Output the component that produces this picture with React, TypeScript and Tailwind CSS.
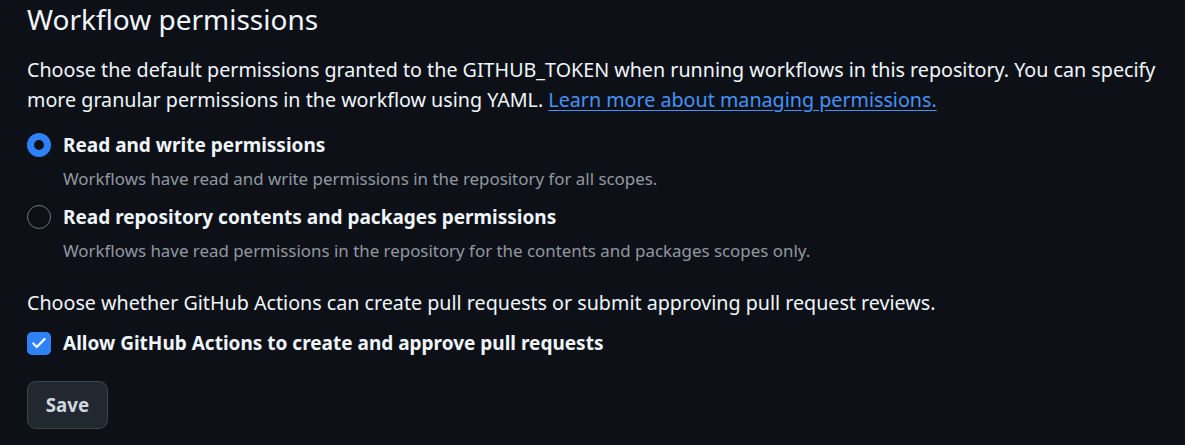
import { useState } from "react";

const font = { fontFamily: '"Noto Sans", "Open Sans", sans-serif' };

function Radio({ checked, onClick }: { checked: boolean; onClick: () => void }) {
  return (
    <button
      type="button"
      onClick={onClick}
      className={`mt-[1px] h-6 w-6 shrink-0 rounded-full ${
        checked ? "border-[7px] border-[#2f81f7] bg-[#0d1117]" : "border-[1.5px] border-[#6e7681] bg-transparent"
      }`}
    />
  );
}

export default function App() {
  const [mode, setMode] = useState<"write" | "read">("write");
  const [allowPr, setAllowPr] = useState(true);

  return (
    <div className="min-h-screen w-full bg-[#0d1117] text-[#f0f6fc]" style={font}>
      <div className="px-[27px]">
        {/* Heading */}
        <h2 className="pt-[1px] text-[28px] leading-[36px] font-normal">Workflow permissions</h2>

        <p className="mt-[18px] text-[19.7px] leading-[30px] text-[#f0f6fc]">
          Choose the default permissions granted to the GITHUB_TOKEN when running workflows in this repository. You can specify
          <br />
          more granular permissions in the workflow using YAML.{" "}
          <a href="#" className="text-[#4493f8] underline underline-offset-[3px]">
            Learn more about managing permissions.
          </a>
        </p>

        {/* Radio options */}
        <div className="mt-[17px] flex flex-col gap-[14px]">
          <label className="flex gap-3">
            <Radio checked={mode === "write"} onClick={() => setMode("write")} />
            <div>
              <div className="text-[19px] font-bold leading-[26px]">Read and write permissions</div>
              <div className="mt-[10px] text-[16.9px] leading-[22px] text-[#9198a1]">
                Workflows have read and write permissions in the repository for all scopes.
              </div>
            </div>
          </label>
          <label className="flex gap-3">
            <Radio checked={mode === "read"} onClick={() => setMode("read")} />
            <div>
              <div className="text-[19px] font-bold leading-[26px]">Read repository contents and packages permissions</div>
              <div className="mt-[10px] text-[16.9px] leading-[22px] text-[#9198a1]">
                Workflows have read permissions in the repository for the contents and packages scopes only.
              </div>
            </div>
          </label>
        </div>

        <p className="mt-[28px] text-[19.7px] leading-[26px]">
          Choose whether GitHub Actions can create pull requests or submit approving pull request reviews.
        </p>

        <label className="mt-[14px] flex items-center gap-3">
          <button
            type="button"
            onClick={() => setAllowPr(!allowPr)}
            className={`flex h-[23px] w-6 items-center justify-center rounded-[5px] ${
              allowPr ? "bg-[#2f81f7]" : "border-[1.5px] border-[#6e7681]"
            }`}
          >
            {allowPr && (
              <svg viewBox="0 0 16 16" className="h-[18px] w-[18px]" fill="none">
                <path d="M3 8.5l3 3 7-7" stroke="white" strokeWidth="2" strokeLinecap="round" strokeLinejoin="round" />
              </svg>
            )}
          </button>
          <span className="text-[19px] font-bold leading-[26px]">Allow GitHub Actions to create and approve pull requests</span>
        </label>

        <button
          type="button"
          className="mt-[25px] h-[48px] w-[81px] rounded-[9px] border border-[#3d444d] bg-[#212830] text-[18.7px] font-bold text-[#d1d7e0]"
        >
          Save
        </button>
      </div>
    </div>
  );
}
